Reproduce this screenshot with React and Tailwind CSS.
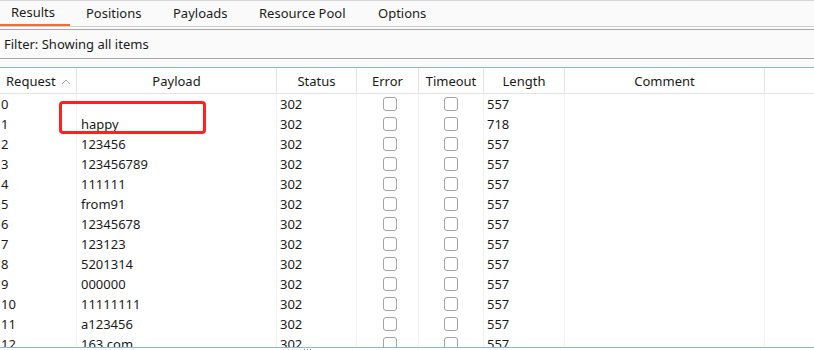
import React from "react";

const tabs = [
  ["Results", "w-[70px] pl-[11px] border-b-2 border-[#ff6633]"],
  ["Positions", "w-[87px] pl-4"],
  ["Payloads", "w-[86px] pl-4"],
  ["Resource Pool", "w-[119px] pl-4"],
  ["Options", "pl-4"],
];

const rows = [
  ["0", "", "302", "557"],
  ["1", "happy", "302", "718"],
  ["2", "123456", "302", "557"],
  ["3", "123456789", "302", "557"],
  ["4", "111111", "302", "557"],
  ["5", "from91", "302", "557"],
  ["6", "12345678", "302", "557"],
  ["7", "123123", "302", "557"],
  ["8", "5201314", "302", "557"],
  ["9", "000000", "302", "557"],
  ["10", "11111111", "302", "557"],
  ["11", "a123456", "302", "557"],
  ["12", "163.com", "302", "557"],
];

const cols = "grid grid-cols-[77px_200px_80px_62px_65px_81px_200px_1fr]";

const Check = () => (
  <div className="w-[14px] h-[14px] rounded-[3px] border border-[#a3a3a3] bg-white" />
);

export default function App() {
  return (
    <div
      className="w-[814px] h-[350px] overflow-hidden bg-[#fafafa] text-[13px] text-[#1a1a1a]"
      style={{ fontFamily: '"Segoe UI", "Noto Sans", sans-serif' }}
    >
      {/* tabs */}
      <div className="h-[27px] border-t border-[#d6d6d6] border-b border-b-[#d0d0d0] flex">
        {tabs.map(([t, cls]) => (
          <div key={t} className={`h-full flex items-center ${cls}`}>
            {t}
          </div>
        ))}
      </div>

      {/* filter */}
      <div className="mt-[2px] h-[30px] border-y border-[#a8a8a8] flex items-center pl-1 pt-[2px]">
        Filter: Showing all items
      </div>

      {/* table */}
      <div className="mt-[8px] border-t border-[#8cb4dc] bg-white relative">
        <div className={`${cols} h-[26px] border-b border-[#e3e3e3]`}>
          <div className="border-r border-[#e3e3e3] flex items-center pl-[6px] gap-[5px] pt-[2px]">
            Request
            <svg width="10" height="6" viewBox="0 0 10 6" fill="none">
              <path d="M1 5 L5 1 L9 5" stroke="#a8a8a8" strokeWidth="1" />
            </svg>
          </div>
          {["Payload", "Status", "Error", "Timeout", "Length", "Comment", ""].map((h) => (
            <div key={h} className="border-r border-[#e3e3e3] flex items-center justify-center pt-[2px] last:border-r-0">
              {h}
            </div>
          ))}
        </div>

        <div className="h-[253px] overflow-hidden">
          {rows.map((r) => (
            <div key={r[0]} className={`${cols} h-[20px]`}>
              <div className="border-r border-[#f2f2f2] flex items-center pl-[1px] pt-[1px]">{r[0]}</div>
              <div className="border-r border-[#f2f2f2] flex items-center pl-[4px] pt-[1px]">{r[1]}</div>
              <div className="border-r border-[#f2f2f2] flex items-center pl-[3px] pt-[1px]">{r[2]}</div>
              <div className="border-r border-[#f2f2f2] flex items-center justify-center pl-[4px]">
                <Check />
              </div>
              <div className="border-r border-[#f2f2f2] flex items-center justify-center">
                <Check />
              </div>
              <div className="border-r border-[#f2f2f2] flex items-center pl-[3px] pt-[1px]">{r[3]}</div>
              <div className="border-r border-[#f2f2f2]" />
              <div />
            </div>
          ))}
        </div>

        {/* annotation box */}
        <div className="absolute left-[59px] top-[33px] w-[147px] h-[33px] border-[3px] border-[#ff2020] rounded-[4px]" />
      </div>

      {/* splitter */}
      <div className="border-t border-[#8cb4dc] h-[3px] bg-white flex justify-center pr-[200px]">
        <div className="flex gap-[2px] mt-[1px]">
          <div className="w-[1px] h-[1px] bg-[#909090]" />
          <div className="w-[1px] h-[1px] bg-[#909090]" />
          <div className="w-[1px] h-[1px] bg-[#909090]" />
        </div>
      </div>
    </div>
  );
}
